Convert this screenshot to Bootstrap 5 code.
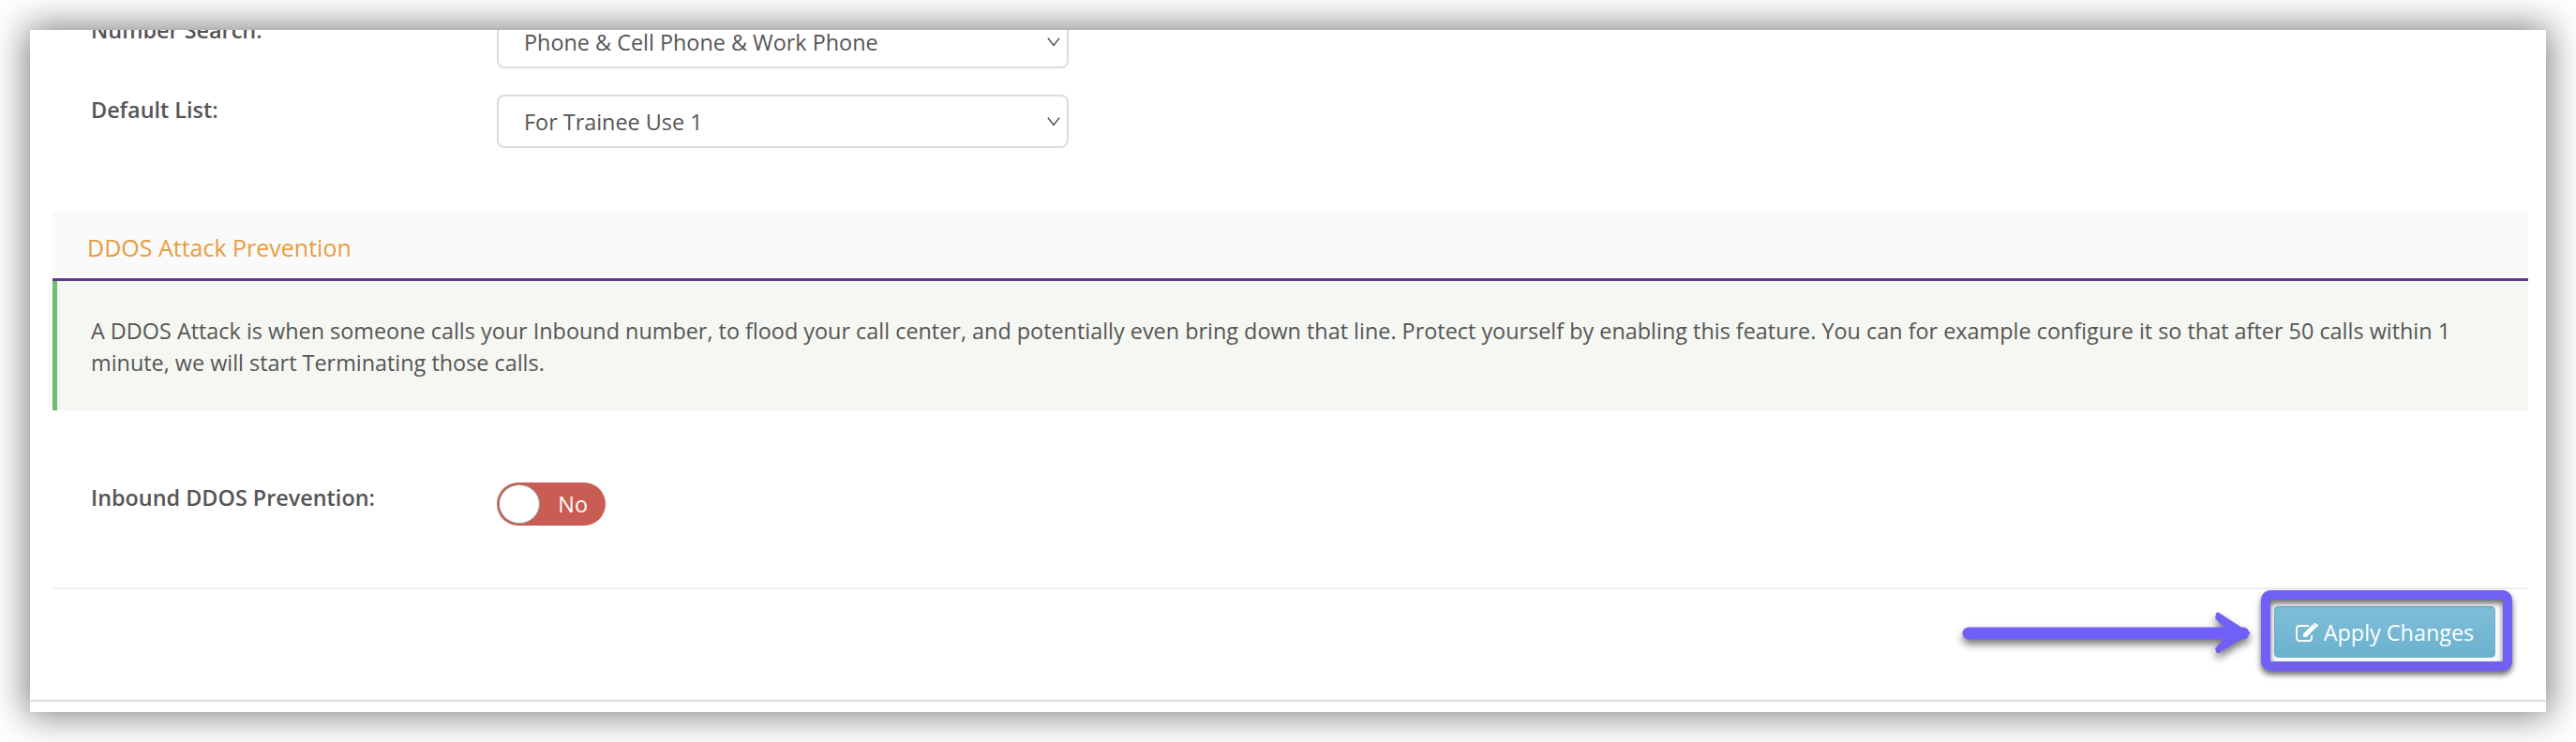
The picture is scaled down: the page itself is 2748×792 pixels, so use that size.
<!DOCTYPE html>
<html lang="en">
<head>
<meta charset="utf-8">
<title>DDOS Attack Prevention</title>
<link href="https://cdn.jsdelivr.net/npm/bootstrap@5.3.0/dist/css/bootstrap.min.css" rel="stylesheet">
<style>
html,body{background:#fff;height:792px;overflow:hidden}
body{font-family:"Open Sans",sans-serif;font-size:23.4px;line-height:34px;color:#555;padding:32px}
.shot-window{height:728px;background:#fff;box-shadow:0 0 36px 4px rgba(0,0,0,.5);overflow:hidden;position:relative}
.shot-inner{margin-top:-16px;padding:0 19px 0 24px}
.field-row{display:flex;align-items:flex-start;margin-bottom:28px}
.field-label{width:474px;padding-left:41px;font-weight:600;flex:none;margin:-1px 0 0;color:#555}
.field-select.form-select{width:610px;height:57px;font-size:23.4px;color:#555;padding:3px 40px 0 27px;border:2px solid #dcdcdc;border-radius:8px;background-size:14px 11px;background-position:right 7px center;background-image:url("data:image/svg+xml,%3csvg xmlns='http://www.w3.org/2000/svg' viewBox='0 0 16 12'%3e%3cpath fill='none' stroke='%23444' stroke-width='1.6' d='M1 1.5l7 9 7-9'/%3e%3c/svg%3e")}
.section-head{margin-top:67px;height:75px;background:#fafafa;border-bottom:3px solid #5c3a86;padding:21px 0 0 37px;color:#e89c3f;font-size:25px;line-height:36px}
.note-box{height:138px;background:#f5f8f2;border-left:5px solid #73bb6f;padding:36px 36px 0 36px}
.note-box p{margin:0}
.toggle-row{margin-top:77px;margin-bottom:0}
.toggle-pill{width:116px;height:46px;background:#c95d54;border-radius:23px;color:#fff;position:relative;display:flex;align-items:center;justify-content:flex-end;padding:0 19px 0 0;line-height:46px}
.toggle-knob{position:absolute;left:2px;top:2px;width:44px;height:42px;border-radius:50%;background:#fff;border:1px solid #999}
.form-foot{margin-top:66px;border-top:2px solid #eee;padding:18px 35px 0 0;display:flex;justify-content:flex-end}
.apply-btn.btn{width:236px;height:55px;background:linear-gradient(#80bfd9,#6ab1ce);border:1px solid #6fb1cd;border-radius:4px;color:#fff;font-size:23.4px;line-height:30px;padding:0;display:flex;align-items:center;justify-content:center;gap:5px}
.apply-btn svg{width:25px;height:20px}
.end-line{position:absolute;left:0;right:0;top:715px;border-top:2px solid #ddd}
.mark-box{position:absolute;left:2380px;top:598px;width:268px;height:86px;border:10px solid #7160f5;border-radius:10px;filter:drop-shadow(0 4px 3px rgba(0,0,0,.6))}
.mark-arrow{position:absolute;left:2056px;top:618px;width:320px;height:50px;filter:drop-shadow(0 5px 4px rgba(0,0,0,.55))}
</style>
</head>
<body>
<div class="shot-window">
  <div class="shot-inner">
    <div class="field-row">
      <label class="field-label">Number Search:</label>
      <select class="form-select field-select"><option>Phone &amp; Cell Phone &amp; Work Phone</option></select>
    </div>
    <div class="field-row mb-0">
      <label class="field-label">Default List:</label>
      <select class="form-select field-select"><option>For Trainee Use 1</option></select>
    </div>
    <div class="section-head">DDOS Attack Prevention</div>
    <div class="note-box"><p>A DDOS Attack is when someone calls your Inbound number, to flood your call center, and potentially even bring down that line. Protect yourself by enabling this feature. You can for example configure it so that after 50 calls within 1 minute, we will start Terminating those calls.</p></div>
    <div class="field-row toggle-row">
      <label class="field-label">Inbound DDOS Prevention:</label>
      <div class="toggle-pill"><span class="toggle-knob"></span>No</div>
    </div>
    <div class="form-foot">
      <button type="button" class="btn apply-btn">
        <svg viewBox="0 0 25 20" fill="none" stroke="#fff" stroke-width="1.8"><path d="M17 13v3a3 3 0 0 1-3 3H4a3 3 0 0 1-3-3V6a3 3 0 0 1 3-3h10"/><path fill="#fff" stroke="none" d="M8 11.5 18.5 1.2l3.6 3.4L11.6 15H8zM19.6.4a1.4 1.4 0 0 1 2 0l1.8 1.7a1.4 1.4 0 0 1 0 2l-.6.6-3.7-3.6z"/></svg>
        Apply Changes
      </button>
    </div>
  </div>
  <div class="end-line"></div>
  <div class="mark-box"></div>
  <svg class="mark-arrow" viewBox="0 0 320 50"><path d="M12 26H305" stroke="#7160f5" stroke-width="13" stroke-linecap="round" fill="none"/><path d="M276 5a2 2 0 0 1 3-1l34 22-34 21a2 2 0 0 1-3-2l-1-3 15-16-15-16z" fill="#7160f5"/></svg>
</div>
</body>
</html>
